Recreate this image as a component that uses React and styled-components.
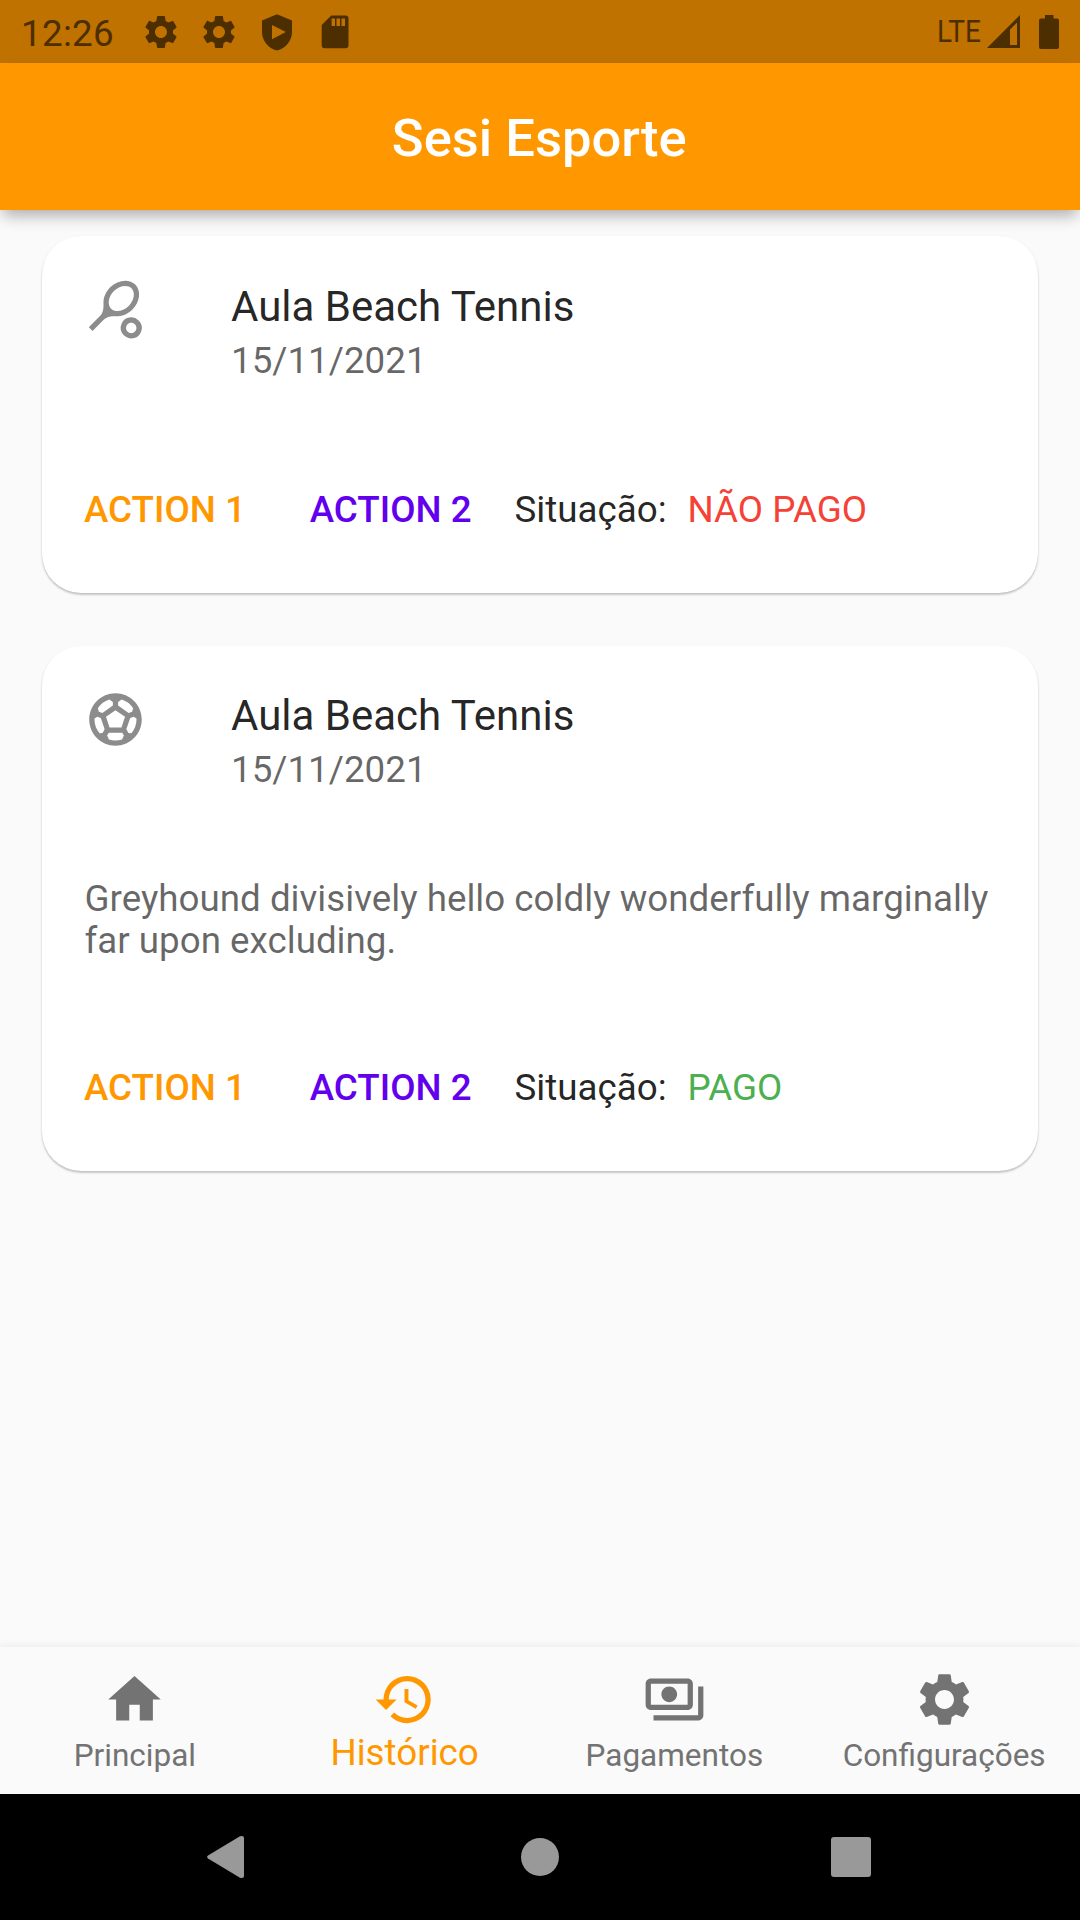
import React from 'react';
import styled, { createGlobalStyle } from 'styled-components';
import {
  MdHistory,
  MdHome,
  MdOutlinePayments,
  MdSettings,
  MdSportsSoccer,
  MdSportsTennis,
} from 'react-icons/md';

const GlobalStyle = createGlobalStyle`
  body { margin: 0; background: #fafafa; }
  *, *::before, *::after { box-sizing: border-box; }
`;

const Screen = styled.div`
  display: flex;
  flex-direction: column;
  width: 1080px;
  height: 1920px;
  overflow: hidden;
  background: #fafafa;
  font-family: Roboto, 'Noto Sans', sans-serif;
  font-size: 36.75px;
  line-height: 43px;
  color: rgba(0, 0, 0, 0.87);
`;

const StatusBar = styled.div`
  display: flex;
  align-items: center;
  flex: 0 0 63px;
  padding: 0 21px 0 21px;
  background: #bf7200;
  color: #4c2e00;
`;

const Clock = styled.span`
  width: 120px;
  padding-top: 3px;
  letter-spacing: 0.3px;
`;

const StatusIcons = styled.div`
  display: flex;
  align-items: center;
  gap: 18px;
  margin-right: auto;

  svg { width: 40px; height: 40px; display: block; }
`;

const NetworkType = styled.span`
  width: 44px;
  margin-right: 6px;
  font-size: 32px;
  transform: scaleX(0.875);
  transform-origin: left center;
`;

const SignalIcon = styled.svg`
  width: 33px;
  height: 33px;
  margin-right: 19px;
`;

const BatteryIcon = styled.svg`
  width: 20px;
  height: 34px;
`;

const AppBar = styled.header`
  position: relative;
  display: flex;
  align-items: center;
  justify-content: center;
  flex: 0 0 147px;
  background: #ff9800;
  box-shadow: 0 8px 15px -3px rgba(0, 0, 0, 0.33);
`;

const AppTitle = styled.h1`
  margin: 0;
  padding: 2px 1.5px 0 0;
  font-size: 52.5px;
  line-height: 62px;
  font-weight: 500;
  color: #fff;
`;

const CardList = styled.main`
  display: flex;
  flex-direction: column;
  gap: 52.5px;
  flex: 1;
  padding: 26.25px 42px;
`;

const Card = styled.article`
  height: ${(p) => (p.$tall ? 525 : 357)}px;
  padding: 45.5px 42px 0;
  border-radius: 39.4px;
  background: #fff;
  box-shadow: 0 2px 2px rgba(0, 0, 0, 0.18), 0 1px 3px rgba(0, 0, 0, 0.07);
`;

const CardHeader = styled.div`
  display: flex;
  height: 101px;
`;

const Leading = styled.div`
  width: 147px;
  margin-top: -3.5px;
  color: #8c8c8c;

  svg { width: 63px; height: 63px; display: block; }
`;

const CardTitle = styled.h2`
  margin: 0;
  font-size: 42px;
  line-height: 49px;
  font-weight: 400;
`;

const CardDate = styled.div`
  margin-top: 8px;
  color: rgba(0, 0, 0, 0.6);
`;

const CardText = styled.p`
  margin: 85.5px 0 0 0.5px;
  line-height: 42px;
  color: rgba(0, 0, 0, 0.6);
`;

const Actions = styled.div`
  display: flex;
  margin-top: ${(p) => (p.$afterText ? 104 : 105.5)}px;
`;

const Action = styled.button`
  width: ${(p) => p.$width}px;
  padding: 0;
  border: 0;
  background: none;
  font: inherit;
  font-weight: 500;
  text-align: left;
  white-space: nowrap;
  color: ${(p) => p.$color};
`;

const StatusLabel = styled.span`
  width: 173px;
`;

const Status = styled.span`
  color: ${(p) => (p.$paid ? '#4caf50' : '#f44336')};
`;

const BottomNav = styled.nav`
  display: grid;
  grid-template-columns: repeat(4, 1fr);
  flex: 0 0 147px;
  padding-right: 1px;
  background: #fafafa;
  box-shadow: 0 -1px 8px rgba(0, 0, 0, 0.07);
`;

const NavItem = styled.div`
  display: flex;
  flex-direction: column;
  align-items: center;
  padding-top: 21px;
  color: ${(p) => (p.$active ? '#ff9800' : '#737373')};

  svg { width: 63px; height: 63px; display: block; }
`;

const NavLabel = styled.span`
  margin-top: ${(p) => (p.$active ? 0 : 6)}px;
  font-size: ${(p) => (p.$active ? 36.75 : 31.5)}px;
  line-height: ${(p) => (p.$active ? 43 : 37)}px;
`;

const SystemNav = styled.div`
  display: flex;
  align-items: center;
  justify-content: space-between;
  flex: 0 0 126px;
  padding: 0 209px 0 207px;
  background: #000;
  color: #999;
`;

const BackIcon = styled.svg`
  width: 42px;
  height: 44px;
`;

const HomeDot = styled.span`
  width: 38px;
  height: 38px;
  border-radius: 50%;
  background: currentColor;
`;

const RecentsSquare = styled.span`
  width: 40px;
  height: 40px;
  border-radius: 3px;
  background: currentColor;
`;

const ShieldPlayIcon = () => (
  <svg viewBox="0 0 40 40" fill="currentColor">
    <path
      fillRule="evenodd"
      d="M20 2.2 35 8.6V20c0 8.7-6.2 16.300-15 18.500C11.200 36.300 5 28.700 5 20V8.600ZM15 13v14.200L28.800 20Z"
    />
  </svg>
);

const SdCardIcon = () => (
  <svg viewBox="0 0 40 40" fill="currentColor">
    <path
      fillRule="evenodd"
      d="M16.300 3.500H30.500a3 3 0 0 1 3 3V33.300a3 3 0 0 1-3 3H9.700a3 3 0 0 1-3-3V13ZM16.600 6.500V14H20V6.500ZM21.500 6.500V14H25V6.500ZM26.500 6.500V14H30V6.500Z"
    />
  </svg>
);

const cards = [
  { icon: MdSportsTennis, paid: false, status: 'NÃO PAGO' },
  {
    icon: MdSportsSoccer,
    paid: true,
    status: 'PAGO',
    text: 'Greyhound divisively hello coldly wonderfully marginally far upon excluding.',
  },
];

const tabs = [
  { icon: MdHome, label: 'Principal' },
  { icon: MdHistory, label: 'Histórico', active: true },
  { icon: MdOutlinePayments, label: 'Pagamentos' },
  { icon: MdSettings, label: 'Configurações' },
];

export default function App() {
  return (
    <Screen>
      <GlobalStyle />
      <StatusBar>
        <Clock>12:26</Clock>
        <StatusIcons>
          <MdSettings />
          <MdSettings />
          <ShieldPlayIcon />
          <SdCardIcon />
        </StatusIcons>
        <NetworkType>LTE</NetworkType>
        <SignalIcon viewBox="0 0 33 33" fill="currentColor">
          <path fillRule="evenodd" d="M33 0V33H0ZM30 7.500 23 14.500V30H30Z" />
        </SignalIcon>
        <BatteryIcon viewBox="0 0 20 34" fill="currentColor">
          <path d="M6 0h8.500v3.500H18a2 2 0 0 1 2 2V32a2 2 0 0 1-2 2H2a2 2 0 0 1-2-2V5.500a2 2 0 0 1 2-2H6Z" />
        </BatteryIcon>
      </StatusBar>
      <AppBar>
        <AppTitle>Sesi Esporte</AppTitle>
      </AppBar>
      <CardList>
        {cards.map(({ icon: Icon, paid, status, text }) => (
          <Card key={status} $tall={Boolean(text)}>
            <CardHeader>
              <Leading>
                <Icon />
              </Leading>
              <div>
                <CardTitle>Aula Beach Tennis</CardTitle>
                <CardDate>15/11/2021</CardDate>
              </div>
            </CardHeader>
            {text && <CardText>{text}</CardText>}
            <Actions $afterText={Boolean(text)}>
              <Action $color="#ff9800" $width={225.75}>ACTION 1</Action>
              <Action $color="#6200ee" $width={204.75}>ACTION 2</Action>
              <StatusLabel>Situação:</StatusLabel>
              <Status $paid={paid}>{status}</Status>
            </Actions>
          </Card>
        ))}
      </CardList>
      <BottomNav>
        {tabs.map(({ icon: Icon, label, active }) => (
          <NavItem key={label} $active={active}>
            <Icon />
            <NavLabel $active={active}>{label}</NavLabel>
          </NavItem>
        ))}
      </BottomNav>
      <SystemNav>
        <BackIcon viewBox="0 0 42 44" fill="currentColor">
          <path d="M1 20.500 33 1.300Q37 0 37 3V41Q37 44 33 42.700L1 23.500Q-.800 22 1 20.500Z" />
        </BackIcon>
        <HomeDot />
        <RecentsSquare />
      </SystemNav>
    </Screen>
  );
}
